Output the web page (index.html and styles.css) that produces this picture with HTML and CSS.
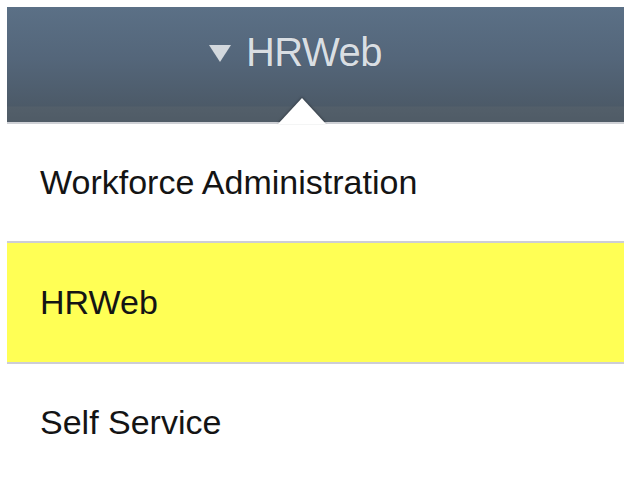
FILE: index.html
```html
<!DOCTYPE html>
<html lang="en">
<head>
<meta charset="utf-8">
<title>HRWeb</title>
<link rel="stylesheet" href="styles.css">
</head>
<body>
  <header class="nav-header">
    <div class="nav-title">
      <span class="nav-caret"></span>
      <span class="nav-label">HRWeb</span>
    </div>
    <span class="nav-pointer"></span>
  </header>
  <ul class="menu">
    <li class="menu-item">Workforce Administration</li>
    <li class="menu-item is-active">HRWeb</li>
    <li class="menu-item">Self Service</li>
  </ul>
</body>
</html>
```

FILE: styles.css
```css
html, body {
  background: #ffffff;
}

body {
  margin: 7px 0 0 7px;
  font-family: "Liberation Sans", Arial, sans-serif;
  overflow: hidden;
}

/* Slate header bar with the section title */
.nav-header {
  position: relative;
  height: 117px;
  background: linear-gradient(#5b7086 0%, #54667a 45%, #4c5a68 86%, #535f6a 87%, #4f5b66 100%);
  display: flex;
  justify-content: center;
  align-items: flex-start;
  padding-right: 40px;
  box-sizing: border-box;
  border-bottom: 2px solid #cfd1d6;
}

.nav-title {
  display: flex;
  align-items: center;
  gap: 15px;
  margin-top: 23px;
  color: #d9dee3;
}

.nav-caret {
  width: 0;
  height: 0;
  border-left: 11px solid transparent;
  border-right: 11px solid transparent;
  border-top: 17px solid #d3d8dd;
  margin-top: 2px;
}

.nav-label {
  font-size: 40px;
  line-height: 44px;
  letter-spacing: -0.5px;
  text-shadow: 0 0 1px rgba(0, 0, 0, 0.25);
}

/* White notch pointing up into the header */
.nav-pointer {
  position: absolute;
  left: 271px;
  bottom: -2px;
  width: 0;
  height: 0;
  border-left: 24px solid transparent;
  border-right: 24px solid transparent;
  border-bottom: 26px solid #ffffff;
  filter: drop-shadow(0 -1px 1px rgba(30, 35, 40, 0.55));
}

/* Menu list */
.menu {
  list-style: none;
  margin: 0;
  padding: 0;
}

.menu-item {
  height: 117px;
  display: flex;
  align-items: center;
  padding-left: 33px;
  font-size: 34px;
  color: #141414;
  border-bottom: 2px solid #cdcdd6;
}

.menu-item:last-child {
  border-bottom: none;
}

.menu-item.is-active {
  background: #ffff55;
  height: 119px;
}
```
